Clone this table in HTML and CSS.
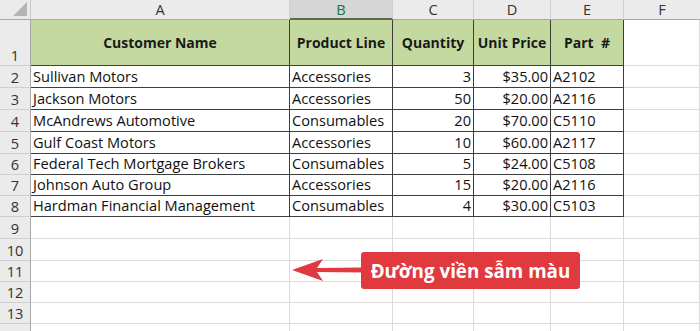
FILE: index.html
```html
<!DOCTYPE html>
<html>
<head>
<meta charset="utf-8">
<link rel="stylesheet" href="styles.css">
</head>
<body>
<div class="sheet">
  <div class="corner"><span class="tri"></span></div>
  <div class="ch">A</div>
  <div class="ch sel">B</div>
  <div class="ch">C</div>
  <div class="ch">D</div>
  <div class="ch">E</div>
  <div class="ch last">F</div>

  <div class="rh">1</div>
  <div class="c hd">Customer Name</div>
  <div class="c hd active">Product Line</div>
  <div class="c hd">Quantity</div>
  <div class="c hd">Unit Price</div>
  <div class="c hd pre">Part  #</div>
  <div class="e"></div>

  <div class="rh">2</div>
  <div class="c">Sullivan Motors</div><div class="c">Accessories</div><div class="c r">3</div><div class="c r">$35.00</div><div class="c">A2102</div><div class="e"></div>
  <div class="rh">3</div>
  <div class="c">Jackson Motors</div><div class="c">Accessories</div><div class="c r">50</div><div class="c r">$20.00</div><div class="c">A2116</div><div class="e"></div>
  <div class="rh">4</div>
  <div class="c">McAndrews Automotive</div><div class="c">Consumables</div><div class="c r">20</div><div class="c r">$70.00</div><div class="c">C5110</div><div class="e"></div>
  <div class="rh">5</div>
  <div class="c">Gulf Coast Motors</div><div class="c">Accessories</div><div class="c r">10</div><div class="c r">$60.00</div><div class="c">A2117</div><div class="e"></div>
  <div class="rh">6</div>
  <div class="c">Federal Tech Mortgage Brokers</div><div class="c">Consumables</div><div class="c r">5</div><div class="c r">$24.00</div><div class="c">C5108</div><div class="e"></div>
  <div class="rh">7</div>
  <div class="c">Johnson Auto Group</div><div class="c">Accessories</div><div class="c r">15</div><div class="c r">$20.00</div><div class="c">A2116</div><div class="e"></div>
  <div class="rh">8</div>
  <div class="c">Hardman Financial Management</div><div class="c">Consumables</div><div class="c r">4</div><div class="c r">$30.00</div><div class="c">C5103</div><div class="e"></div>

  <div class="rh">9</div><div class="e"></div><div class="e"></div><div class="e"></div><div class="e"></div><div class="e"></div><div class="e"></div>
  <div class="rh">10</div><div class="e"></div><div class="e"></div><div class="e"></div><div class="e"></div><div class="e"></div><div class="e"></div>
  <div class="rh">11</div><div class="e"></div><div class="e"></div><div class="e"></div><div class="e"></div><div class="e"></div><div class="e"></div>
  <div class="rh">12</div><div class="e"></div><div class="e"></div><div class="e"></div><div class="e"></div><div class="e"></div><div class="e"></div>
  <div class="rh">13</div><div class="e"></div><div class="e"></div><div class="e"></div><div class="e"></div><div class="e"></div><div class="e"></div>
  <div class="rh"></div><div class="e"></div><div class="e"></div><div class="e"></div><div class="e"></div><div class="e"></div><div class="e"></div>

  <svg class="arrow" width="70" height="26" viewBox="0 0 70 26">
    <path d="M0 13 L31 2 L25 11 L70 10.5 L70 15.5 L25 15 L31 24 Z" fill="#e0393e"/>
  </svg>
  <div class="callout">Đường viền sẫm màu</div>
</div>
</body>
</html>
```
FILE: styles.css
```css
html, body {
  margin: 0;
  padding: 0;
  background: #ffffff;
}
.sheet {
  position: relative;
  width: 700px;
  height: 331px;
  overflow: hidden;
  display: grid;
  grid-template-columns: 31px 259px 103px 81px 77px 73px 76px;
  grid-template-rows: 20px 46px 22px 22px 22px 22px 21px 21px 21px 22px 22px 21px 21px 21px 20px;
  font-family: "Open Sans", "Liberation Sans", sans-serif;
  font-size: 14.6px;
  color: #111;
}
.corner {
  background: #ebebeb;
  border-right: 1px solid #c9c9c9;
  border-bottom: 1px solid #a8a8a8;
  position: relative;
}
.tri {
  position: absolute;
  right: 3px;
  bottom: 3px;
  width: 0;
  height: 0;
  border-left: 14px solid transparent;
  border-bottom: 14px solid #b5b5b5;
}
.ch {
  background: #ebebeb;
  border-right: 1px solid #cfcfcf;
  border-bottom: 1px solid #a8a8a8;
  display: flex;
  align-items: center;
  justify-content: center;
  color: #333;
  font-size: 14.6px;
  line-height: 1;
}
.ch.sel {
  background: #d6d6d6;
  color: #217346;
  border-bottom: 2px solid #5a6b4f;
}
.ch.last { border-right: none; }
.rh {
  background: #ebebeb;
  border-right: 1px solid #a8a8a8;
  border-bottom: 1px solid #cfcfcf;
  display: flex;
  align-items: flex-end;
  justify-content: center;
  color: #333;
  font-size: 14.6px;
  line-height: 20px;
}
.c {
  border-right: 1px solid #3e3e3e;
  border-bottom: 1px solid #3e3e3e;
  display: flex;
  align-items: flex-end;
  padding: 0 2px;
  line-height: 21px;
  white-space: nowrap;
  overflow: hidden;
}
.c.r { justify-content: flex-end; }
.c.hd {
  background: #c4d9a0;
  font-weight: 700;
  font-size: 14px;
  justify-content: center;
  align-items: center;
  color: #1a1a1a;
}
.c.pre { white-space: pre; }
.c.active {
  border-left: 1px solid #3e3e3e;
  margin-left: -1px;
}
.e {
  border-right: 1px solid #dadada;
  border-bottom: 1px solid #dadada;
}
.arrow {
  position: absolute;
  left: 292px;
  top: 257px;
}
.callout {
  position: absolute;
  left: 361px;
  top: 252px;
  width: 219px;
  height: 37px;
  box-sizing: border-box;
  background: #e0393e;
  border-radius: 3px;
  color: #ffffff;
  font-family: "Open Sans", "Liberation Sans", sans-serif;
  font-weight: 700;
  font-size: 18.8px;
  display: flex;
  align-items: center;
  justify-content: center;
}
```
